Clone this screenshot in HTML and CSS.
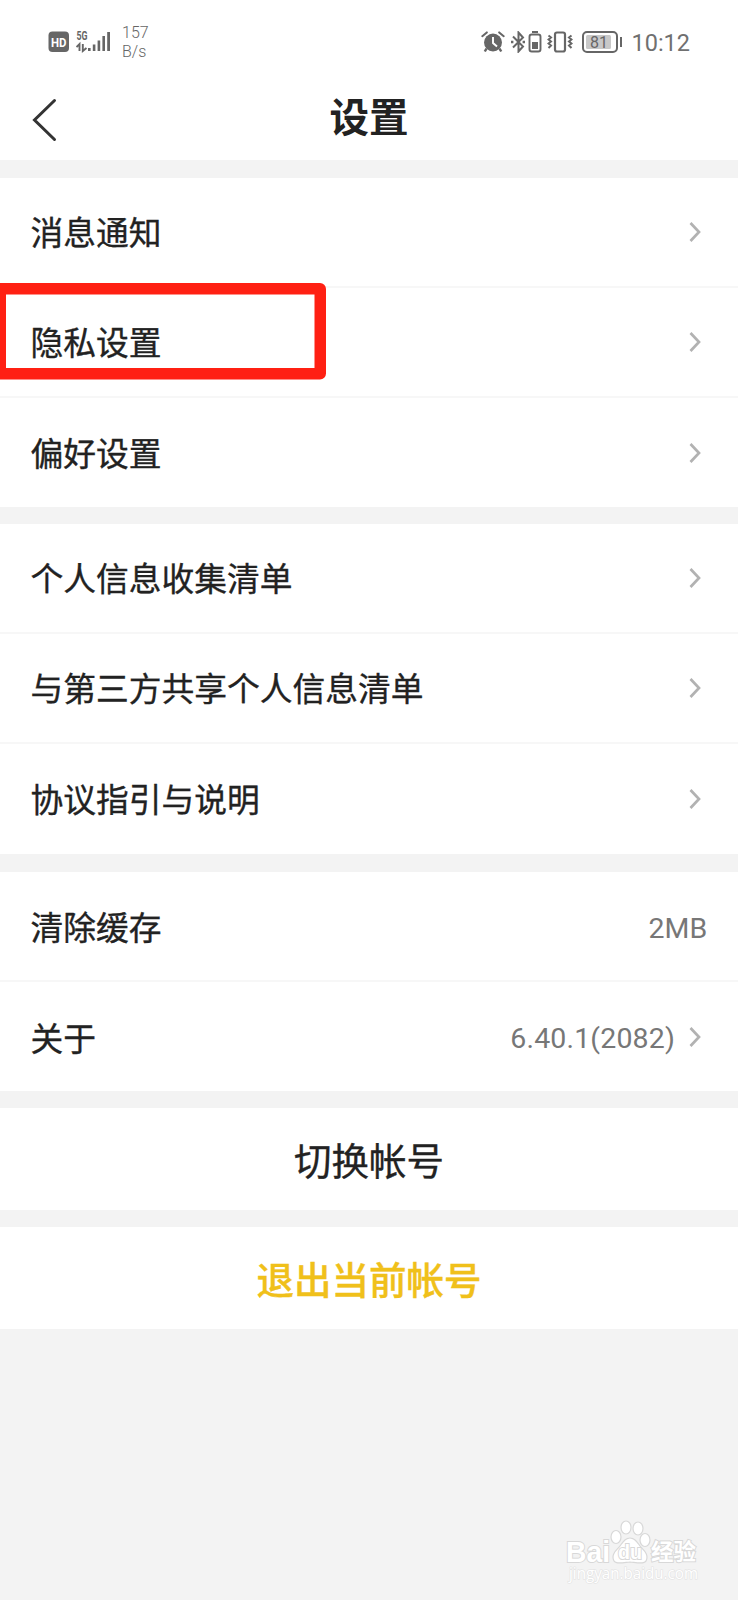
FILE: index.html
```html
<!DOCTYPE html>
<html lang="zh-CN">
<head>
    <meta charset="UTF-8">
    <meta name="viewport" content="width=device-width, initial-scale=1.0">
    <title>设置</title>
    <link rel="stylesheet" href="styles.css">
</head>
<body>
    <div class="status-bar">
        <svg class="icon-hd" width="22" height="22" viewBox="0 0 22 22">
            <rect x="0.5" y="0.5" width="20.5" height="20.5" rx="4" fill="#666"/>
            <text x="3" y="15.5" textLength="15.5" lengthAdjust="spacingAndGlyphs">HD</text>
        </svg>
        <svg class="icon-signal" width="36" height="30" viewBox="0 -3 36 30">
            <text x="0.5" y="9.500" textLength="11" lengthAdjust="spacingAndGlyphs">5G</text>
            <path d="M0.500 17L3.500 14V21M6.800 14V21L10.500 18" fill="none" stroke="#666" stroke-width="1.900"/>
            <path d="M12 18h2.600v3H12zM16.800 14.500h2.600v6.500h-2.600zM21.600 10.500h2.600v10.500h-2.600zM26.400 6h2.600v15h-2.600zM31.200 2h2.800v19h-2.800z" fill="#666"/>
        </svg>
        <div class="speed">
            <span>157</span>
            <span>B/s</span>
        </div>
        <div class="status-right">
            <svg class="icon-alarm" width="24" height="22" viewBox="0 0 24 22">
                <circle cx="12" cy="11.500" r="9" fill="#666"/>
                <path d="M5.500 17.500L3.800 20.500M18.500 17.500l1.700 3" stroke="#666" stroke-width="2.500"/>
                <path d="M1.300 5.200L5.800 1.400M22.700 5.200L18.200 1.400" stroke="#666" stroke-width="2" stroke-linecap="round"/>
                <path d="M12 6v6l4 3.500" fill="none" stroke="#fff" stroke-width="1.900"/>
            </svg>
            <svg class="icon-bluetooth" width="14" height="22" viewBox="0 0 14 22">
                <path d="M2 5.500L12 15.500L7.500 20.500V1.500L12 6.500L2 16.500" fill="none" stroke="#666" stroke-width="2"/>
                <path d="M0 9.800h2.400v2.400H0zM11.600 9.800H14v2.400h-2.400z" fill="#666"/>
            </svg>
            <svg class="icon-device" width="14" height="22" viewBox="0 0 14 22">
                <path d="M4 1h6" stroke="#666" stroke-width="2"/>
                <rect x="1.500" y="3.500" width="11" height="17" rx="2.300" fill="none" stroke="#666" stroke-width="1.900"/>
                <path d="M4 11h6v7H4z" fill="#666"/>
            </svg>
            <svg class="icon-vibrate" width="26" height="22" viewBox="0 0 26 22">
                <rect x="8" y="1.500" width="10" height="19" rx="2" fill="none" stroke="#666" stroke-width="2.200"/>
                <path d="M1.500 4.500l2.500 2-2.500 2 2.500 2-2.500 2 2.500 2-2.500 2.500M24.500 4.500l-2.500 2 2.500 2-2.500 2 2.500 2-2.500 2 2.500 2.500" fill="none" stroke="#666" stroke-width="2"/>
            </svg>
            <svg class="icon-battery" width="42" height="22" viewBox="0 0 42 22">
                <rect x="1" y="1" width="34" height="20" rx="4" fill="none" stroke="#666" stroke-width="2"/>
                <rect x="4" y="4" width="25" height="14" rx="1.500" fill="#c8c8c8"/>
                <path d="M39 6v10" stroke="#666" stroke-width="2"/>
                <text x="8" y="17" textLength="18" lengthAdjust="spacingAndGlyphs">81</text>
            </svg>
            <span class="clock">10:12</span>
        </div>
    </div>

    <div class="nav">
        <svg class="back" width="26" height="46" viewBox="0 0 26 46">
            <path d="M22.500 3.500L2.500 23L22.500 42.500" fill="none" stroke="#333" stroke-width="3" stroke-linecap="round"/>
        </svg>
        <h1>设置</h1>
    </div>

    <div class="group">
        <div class="row">
            <span class="label">消息通知</span>
            <svg class="arrow" viewBox="0 0 12 20"><path d="M1.500 1L10 10L1.500 19"/></svg>
        </div>
        <div class="row">
            <span class="label">隐私设置</span>
            <svg class="arrow" viewBox="0 0 12 20"><path d="M1.500 1L10 10L1.500 19"/></svg>
            <!-- 红框标记 -->
            <svg class="mark" width="326" height="97" viewBox="0 0 326 97">
                <path fill-rule="evenodd" d="M0 0H320a6 6 0 0 1 6 6V90.500a6 6 0 0 1-6 6H0zM6 11.500V85H314.500V11.500z" fill="#ff2013"/>
            </svg>
        </div>
        <div class="row">
            <span class="label">偏好设置</span>
            <svg class="arrow" viewBox="0 0 12 20"><path d="M1.500 1L10 10L1.500 19"/></svg>
        </div>
    </div>

    <div class="group group-list">
        <div class="row">
            <span class="label">个人信息收集清单</span>
            <svg class="arrow" viewBox="0 0 12 20"><path d="M1.500 1L10 10L1.500 19"/></svg>
        </div>
        <div class="row">
            <span class="label">与第三方共享个人信息清单</span>
            <svg class="arrow" viewBox="0 0 12 20"><path d="M1.500 1L10 10L1.500 19"/></svg>
        </div>
        <div class="row">
            <span class="label">协议指引与说明</span>
            <svg class="arrow" viewBox="0 0 12 20"><path d="M1.500 1L10 10L1.500 19"/></svg>
        </div>
    </div>

    <div class="group group-info">
        <div class="row">
            <span class="label">清除缓存</span>
            <span class="value cache">2MB</span>
        </div>
        <div class="row">
            <span class="label">关于</span>
            <span class="value">6.40.1(2082)</span>
            <svg class="arrow" viewBox="0 0 12 20"><path d="M1.500 1L10 10L1.500 19"/></svg>
        </div>
    </div>

    <button class="btn">切换帐号</button>
    <button class="btn logout">退出当前帐号</button>

    <!-- 水印 -->
    <svg class="watermark" width="140" height="76" viewBox="0 0 140 76">
        <g fill="#fff" stroke="#d8d8d8" stroke-width="2">
            <text class="wm-bold" x="2" y="41.500" textLength="44" lengthAdjust="spacingAndGlyphs">Bai</text>
            <ellipse cx="52" cy="17" rx="5" ry="6.500" stroke-width="1.200"/>
            <ellipse cx="62" cy="7.500" rx="5" ry="6.500" stroke-width="1.200"/>
            <ellipse cx="74" cy="8.500" rx="5" ry="6.500" stroke-width="1.200"/>
            <ellipse cx="81" cy="20" rx="5" ry="6.500" stroke-width="1.200"/>
            <path d="M66 18c-5 0-7 4-10 8s-7 6-7 11c0 8 7 6 17 5 10 1 17 3 17-5 0-5-4-7-7-11s-5-8-10-8z" stroke-width="1.200"/>
            <text class="wm-du" x="54" y="39" textLength="24" lengthAdjust="spacingAndGlyphs">du</text>
            <text class="wm-cn" x="87" y="40" textLength="45" lengthAdjust="spacingAndGlyphs">经验</text>
        </g>
        <text class="wm-url" x="5" y="59" textLength="129" lengthAdjust="spacingAndGlyphs">jingyan.baidu.com</text>
    </svg>
</body>
</html>
```

FILE: styles.css
```css
body {
    margin: 0;
    min-height: 1600px;
    background-color: #f3f3f3;
    color: #222;
    font-family: "Noto Sans CJK SC", sans-serif;
    display: flex;
    flex-direction: column;
    position: relative;
}
svg {
    display: block;
    flex-shrink: 0;
}
.status-bar {
    box-sizing: border-box;
    height: 74px;
    padding: 10px 48px 0 48px;
    background-color: #fff;
    color: #666;
    font-family: Roboto, sans-serif;
    display: flex;
    align-items: center;
}
.status-bar text {
    fill: #666;
    font-weight: 700;
}
.status-bar .icon-hd text {
    fill: #fff;
    font-size: 13px;
}
.icon-signal {
    margin-left: 6px;
}
.icon-signal text {
    font-size: 12.5px;
}
.speed {
    margin-left: 10px;
    padding-top: 1px;
    display: flex;
    flex-direction: column;
    font-size: 16px;
    line-height: 18.5px;
    font-weight: 300;
}
.status-right {
    margin-left: auto;
    display: flex;
    align-items: center;
}
.icon-bluetooth {
    margin-left: 6px;
}
.icon-device {
    margin-left: 3px;
}
.icon-vibrate {
    margin-left: 5px;
}
.icon-battery {
    margin-left: 9px;
}
.status-bar .icon-battery text {
    font-size: 17px;
    font-weight: 400;
}
.clock {
    margin-left: 7px;
    padding-top: 2px;
    font-size: 23.5px;
    color: #707070;
}
.nav {
    height: 86px;
    background-color: #fff;
    display: grid;
    grid-template-columns: 64px 1fr 64px;
    align-items: center;
}
.back {
    margin: 6px 0 0 32px;
}
.nav h1 {
    margin: 0 0 4px;
    grid-column: 2;
    font-size: 39.5px;
    line-height: 60px;
    font-weight: 700;
    text-align: center;
}
.group {
    margin-top: 18px;
    background-color: #fff;
}
.group-list {
    margin-top: 17px;
}
.row {
    box-sizing: border-box;
    height: 110px;
    padding: 0 37px 0 30.5px;
    border-bottom: 2px solid #f7f7f7;
    display: flex;
    align-items: center;
    position: relative;
}
.row:last-child {
    height: 109px;
    border-bottom: none;
}
.group-list .row:last-child {
    height: 110px;
}
.label {
    flex: 1;
    padding-bottom: 2px;
    font-size: 32.75px;
    line-height: 48px;
    -webkit-text-stroke: 0.35px #222;
}
.group-info .label {
    padding-bottom: 0;
}
.arrow {
    width: 12px;
    height: 20px;
}
.arrow path {
    fill: none;
    stroke: #b2b2b2;
    stroke-width: 2.7;
}
.mark {
    position: absolute;
    left: 0;
    top: -5px;
}
.value {
    margin-right: 14px;
    padding-top: 4px;
    color: #777;
    font-family: Roboto, sans-serif;
    font-size: 28.5px;
    letter-spacing: 0.15px;
}
.cache {
    margin-right: -6.5px;
}
.btn {
    height: 102px;
    margin: 17px 0 0;
    padding: 0 0 1px;
    border: none;
    background-color: #fff;
    color: #222;
    font-family: inherit;
    font-size: 37.5px;
    line-height: 54px;
    -webkit-text-stroke: 0.35px currentColor;
}
.logout {
    color: #f0c01a;
    font-weight: 500;
}
.watermark {
    position: absolute;
    left: 564px;
    top: 1520px;
}
.watermark text {
    paint-order: stroke;
}
.wm-bold {
    font: 700 30px "Liberation Sans", sans-serif;
}
.wm-du {
    font: 700 21px "Liberation Sans", sans-serif;
}
.wm-cn {
    font: 700 23px "Noto Sans CJK SC", sans-serif;
}
.wm-url {
    font: 400 16.5px "Open Sans", sans-serif;
    fill: #fff;
    stroke: #e2e2e2;
    stroke-width: 1.2px;
}
```
